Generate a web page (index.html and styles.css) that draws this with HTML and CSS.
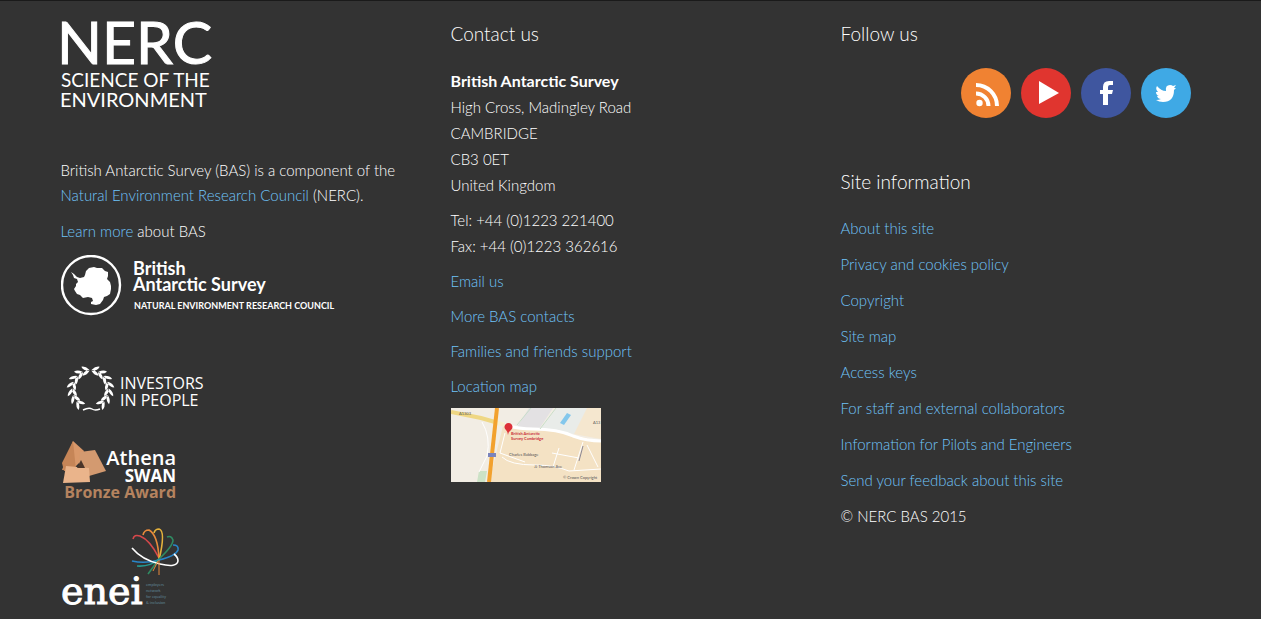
FILE: index.html
```html
<!DOCTYPE html>
<html lang="en">
<head>
    <meta charset="UTF-8">
    <meta name="viewport" content="width=device-width, initial-scale=1.0">
    <title>British Antarctic Survey</title>
    <link rel="stylesheet" href="styles.css">
</head>
<body>
    <footer class="footer">
        <div class="container">

            <div class="column about">
                <a class="logo nerc" href="#">
                    <svg width="156" height="94" viewBox="0 0 156 94">
                        <text class="nerc-name" x="-4" y="46">NERC</text>
                        <text class="nerc-line" x="0" y="69">SCIENCE OF THE</text>
                        <text class="nerc-line wide" x="-1" y="89">ENVIRONMENT</text>
                    </svg>
                </a>
                <p>British Antarctic Survey (BAS) is a component of the <a href="#">Natural Environment Research Council</a> (NERC).</p>
                <p><a href="#">Learn more</a> about BAS</p>
                <a class="logo bas" href="#">
                    <svg width="280" height="62" viewBox="0 0 280 62">
                        <circle cx="30" cy="30" r="29" fill="none" stroke="#fff" stroke-width="2.4"/>
                        <path fill="#fff" d="M10 17l3 2 3 3 3 1 4-1 1-2 1-4 3-3 5-1 3 1 5 0 3 3 3 1 0 4-1 3 3 3 1 4 0 3-1 5-3 2-3 1-1 3-3 4-4 1-5-1 0-2 2-1-1-3-4-1-5 1-3-3-3-1-2-3-1-2 2-3 0-2 2-2-1-3-3-1-1-3z"/>
                        <text class="bas-name" x="72" y="20">British</text>
                        <text class="bas-name" x="72" y="36">Antarctic Survey</text>
                        <text class="bas-line" x="73" y="54">NATURAL ENVIRONMENT RESEARCH COUNCIL</text>
                    </svg>
                </a>
                <a class="logo iip" href="#">
                    <svg width="150" height="52" viewBox="0 0 150 52">
                        <defs>
                            <g id="leaf">
                                <path d="M3-19Q0-24 -4-24Q-3-20 2-18zM3-18Q-1-14 -5-15Q-3-19 2-19z"/>
                            </g>
                            <g id="branch" fill="#fff">
                                <use href="#leaf" transform="rotate(-14)"/>
                                <use href="#leaf" transform="rotate(-35)"/>
                                <use href="#leaf" transform="rotate(-56)"/>
                                <use href="#leaf" transform="rotate(-77)"/>
                                <use href="#leaf" transform="rotate(-98)"/>
                                <use href="#leaf" transform="rotate(-119)"/>
                                <use href="#leaf" transform="rotate(-140)"/>
                            </g>
                        </defs>
                        <use href="#branch" transform="translate(29 26) scale(-1 1)"/>
                        <use href="#branch" transform="translate(30 26)"/>
                        <path d="M22 47q6-3 9-1t8 0" fill="none" stroke="#fff" stroke-width="1.5"/>
                        <text class="iip-name" x="59" y="26">INVESTORS</text>
                        <text class="iip-name" x="59" y="43">IN PEOPLE</text>
                    </svg>
                </a>
                <a class="logo athena" href="#">
                    <svg width="120" height="64" viewBox="0 0 120 64">
                        <path fill="#d9986a" d="M12 1l11 10-3 10-8 8-11 1z"/>
                        <path fill="#c68557" d="M12 1l-11 22 2 8 12-1z"/>
                        <path fill="#d39a70" d="M19 12l15-2 11 21-17 5-10-9z"/>
                        <path fill="#eab48b" d="M5 26l23 2 1 14-27 1z"/>
                        <path fill="#4a3529" d="M20 20l4 8h-8z"/>
                        <text class="athena-name" x="115" y="25">Athena</text>
                        <text class="athena-name swan" x="115" y="42">SWAN</text>
                        <text class="athena-award" x="115" y="58">Bronze Award</text>
                    </svg>
                </a>
                <a class="logo enei" href="#">
                    <svg width="120" height="86" viewBox="0 0 120 86">
                        <g fill="none" stroke-width="1.6">
                            <path stroke="#d8484b" d="M72 11Q73 6 79 8Q89 12 98 30"/>
                            <path stroke="#e88a3c" d="M82 7Q83 2 88 2Q97 7 98 31"/>
                            <path stroke="#e5b23c" d="M93 5Q94 1 98 1Q105 3 98 32"/>
                            <path stroke="#2f8a62" d="M106 9Q110 7 112 12Q112 18 98 31L87 46"/>
                            <path stroke="#2985c8" d="M112 17Q118 17 117 22Q115 28 98 32Q84 36 71 33"/>
                            <path stroke="#249b94" d="M98 31Q89 39 76 38"/>
                            <path stroke="#fff" d="M71 20Q81 32 99 36Q116 40 117 33Q117 29 113 26"/>
                            <path stroke="#e88a3c" stroke-width="1" d="M97 33L92 43M98 32V47"/>
                        </g>
                        <text class="enei-name" x="0" y="76">enei</text>
                        <g class="enei-line">
                            <text x="85" y="58">employers</text>
                            <text x="85" y="64">network</text>
                            <text x="85" y="70">for equality</text>
                            <text x="85" y="76">&amp; inclusion</text>
                        </g>
                    </svg>
                </a>
            </div>

            <div class="column contact">
                <h3>Contact us</h3>
                <p>
                    <strong>British Antarctic Survey</strong><br>
                    High Cross, Madingley Road<br>
                    CAMBRIDGE<br>
                    CB3 0ET<br>
                    United Kingdom
                </p>
                <p>Tel: +44 (0)1223 221400<br>Fax: +44 (0)1223 362616</p>
                <p><a href="#">Email us</a></p>
                <p><a href="#">More BAS contacts</a></p>
                <p><a href="#">Families and friends support</a></p>
                <p><a href="#">Location map</a></p>
                <a class="map" href="#" aria-label="Location map">
                    <svg width="150" height="74" viewBox="0 0 150 74">
                        <path fill="#f2ede4" d="M0 0h150v74H0z"/>
                        <path fill="#f4e2c4" d="M52 18l50 5 48 10v41H38z"/>
                        <path fill="#f5e7cf" d="M135 0h15v31l-28-5z"/>
                        <path fill="#e3e1e3" d="M78 0h24L88 21l-22-2z"/>
                        <path fill="#e9ece9" d="M106 0h30l-13 26-33-6z"/>
                        <path fill="#83c7ec" d="M116 5l4 2-7 10-4-2z"/>
                        <path fill="#cce2c6" d="M28 63h8l-2 11h-8z"/>
                        <g fill="none" stroke="#fff">
                            <path stroke-width="3" d="M50 15q13 6 32 6 25 0 40 7 14 5 28 5"/>
                            <path d="M31 14q9 15 5 34l-8 16M51 49q8 8 33 8 19 0 34 6l32-2M54 25l-5 20 25 9"/>
                            <path d="M108 40l-6 19M132 34l-9 28M101 45l27 5M136 37l11 22"/>
                        </g>
                        <path fill="none" stroke="#c8deca" d="M80 0L66 17M105 0L89 21"/>
                        <path fill="none" stroke="#efd783" stroke-width="4" d="M0 4l30 6 14 4"/>
                        <path fill="none" stroke="#f7f0d0" stroke-width="4" d="M44 14l10 3"/>
                        <path fill="none" stroke="#f2a12e" stroke-width="4" d="M46 0L38 74"/>
                        <path fill="#7a83bb" d="M37 45h8v4h-8z"/>
                        <path fill="none" stroke="#8b8794" stroke-width="1" d="M132 38l-4 15"/>
                        <path fill="#dc3037" d="M57 27q0-3-2-5a4 4 0 1 1 5 0q-3 2-3 5z"/>
                        <g class="map-text">
                            <text class="map-pin" x="60" y="27">British Antarctic</text>
                            <text class="map-pin" x="60" y="32">Survey Cambridge</text>
                            <text x="8" y="7">A1303</text>
                            <text x="58" y="48">Charles Babbage</text>
                            <text x="83" y="60">JJ Thomson Ave</text>
                            <text x="142" y="16">A13</text>
                            <text x="112" y="71">© Crown Copyright</text>
                        </g>
                    </svg>
                </a>
            </div>

            <div class="column site">
                <h3>Follow us</h3>
                <div class="social">
                    <a class="rss" href="#" aria-label="RSS">
                        <svg width="50" height="50" viewBox="0 0 50 50">
                            <circle cx="18.5" cy="35" r="3.2" fill="#fff"/>
                            <path fill="none" stroke="#fff" stroke-width="4" d="M15 25.5a12.5 12.5 0 0 1 12.5 12.5M15 17a21 21 0 0 1 21 21"/>
                        </svg>
                    </a>
                    <a class="youtube" href="#" aria-label="YouTube">
                        <svg width="50" height="50" viewBox="0 0 50 50"><path fill="#fff" d="M18 13l20 12-20 11z"/></svg>
                    </a>
                    <a class="facebook" href="#" aria-label="Facebook">
                        <svg width="50" height="50" viewBox="0 0 50 50"><path fill="#fff" d="M22 37V26h-3v-4h3v-3q0-6 6-6h4v4h-3q-2 0-2 2v3h5l-1 4h-4v11z"/></svg>
                    </a>
                    <a class="twitter" href="#" aria-label="Twitter">
                        <svg width="50" height="50" viewBox="0 0 50 50"><path fill="#fff" d="M16 18q4 5 9 5-1-6 4-6 2 0 3 1l3-1-2 3 2 0-2 2q0 12-11 12-4 0-7-2 3 0 5-1-3 0-4-3h2q-3-1-3-4l2 0q-3-3-1-6z"/></svg>
                    </a>
                </div>
                <h3>Site information</h3>
                <ul class="links">
                    <li><a href="#">About this site</a></li>
                    <li><a href="#">Privacy and cookies policy</a></li>
                    <li><a href="#">Copyright</a></li>
                    <li><a href="#">Site map</a></li>
                    <li><a href="#">Access keys</a></li>
                    <li><a href="#">For staff and external collaborators</a></li>
                    <li><a href="#">Information for Pilots and Engineers</a></li>
                    <li><a href="#">Send your feedback about this site</a></li>
                    <li>© NERC BAS 2015</li>
                </ul>
            </div>

        </div>
    </footer>
</body>
</html>
```
FILE: styles.css
```css
* {
    box-sizing: border-box;
}

body {
    margin: 0;
    background-color: #333;
    color: #fff;
    font-family: Lato, "Liberation Sans", sans-serif;
    font-size: 15px;
    font-weight: 300;
    line-height: 25px;
}

a {
    color: #70c4fa;
    text-decoration: none;
}

a:hover {
    text-decoration: underline;
}

h3 {
    margin: 0 0 22px;
    font-size: 19px;
    font-weight: 300;
}

p {
    margin: 0 0 11px;
}

strong {
    font-size: 16px;
    font-weight: 700;
}

svg {
    display: block;
}

.footer {
    border-top: 1px solid #1a1a1a;
}

.container {
    max-width: 1170px;
    margin: 0 auto;
    padding: 0 15px;
    display: grid;
    grid-template-columns: repeat(3, 1fr);
    gap: 30px;
}

.contact,
.site {
    padding-top: 20px;
}

.contact p {
    margin-bottom: 9px;
    line-height: 26px;
}

/* logos */
.logo {
    display: block;
    width: fit-content;
}

.logo text {
    fill: #fff;
}

.nerc {
    margin: 17px 0 46px;
}

.nerc .nerc-name {
    font-size: 59px;
    font-weight: 400;
    stroke: #fff;
    stroke-width: 1px;
}

.nerc .nerc-line {
    font-size: 19px;
    font-weight: 400;
}

.nerc .wide {
    font-size: 20px;
}

.bas {
    margin-bottom: 46px;
}

.bas .bas-name {
    font-size: 18px;
    font-weight: 700;
}

.bas .bas-line {
    font-size: 9px;
    font-weight: 700;
}

.iip {
    margin-bottom: 25px;
}

.iip .iip-name {
    font-family: "Open Sans", sans-serif;
    font-size: 16px;
    font-weight: 400;
}

.athena {
    margin-bottom: 24px;
}

.athena text {
    font-family: "Open Sans", sans-serif;
    font-weight: 600;
    text-anchor: end;
}

.athena .athena-name {
    font-size: 20px;
}

.athena .swan {
    font-size: 17px;
    font-weight: 700;
}

.athena .athena-award {
    font-size: 16px;
    font-weight: 700;
    fill: #b5835f;
}

.enei .enei-name {
    font-family: "DejaVu Serif", serif;
    font-size: 38px;
    stroke: #fff;
    stroke-width: 1px;
}

.enei .enei-line text {
    font-size: 4px;
    font-weight: 400;
    fill: #5f8494;
}

/* map */
.map {
    display: block;
    width: fit-content;
}

.map-text text {
    font-size: 4px;
    font-weight: 400;
    fill: #555;
}

.map-text .map-pin {
    font-weight: 700;
    fill: #c9303a;
}

/* social icons */
.social {
    display: flex;
    justify-content: flex-end;
    gap: 10px;
    padding-right: 10px;
    margin-bottom: 51px;
}

.social a {
    width: 50px;
    height: 50px;
    border-radius: 50%;
}

.rss {
    background-color: #f08232;
}

.youtube {
    background-color: #e0352f;
}

.facebook {
    background-color: #3f569f;
}

.twitter {
    background-color: #3fa9e5;
}

.links {
    list-style: none;
    margin: 0;
    padding: 0;
}

.links li {
    margin-bottom: 11px;
}
```
